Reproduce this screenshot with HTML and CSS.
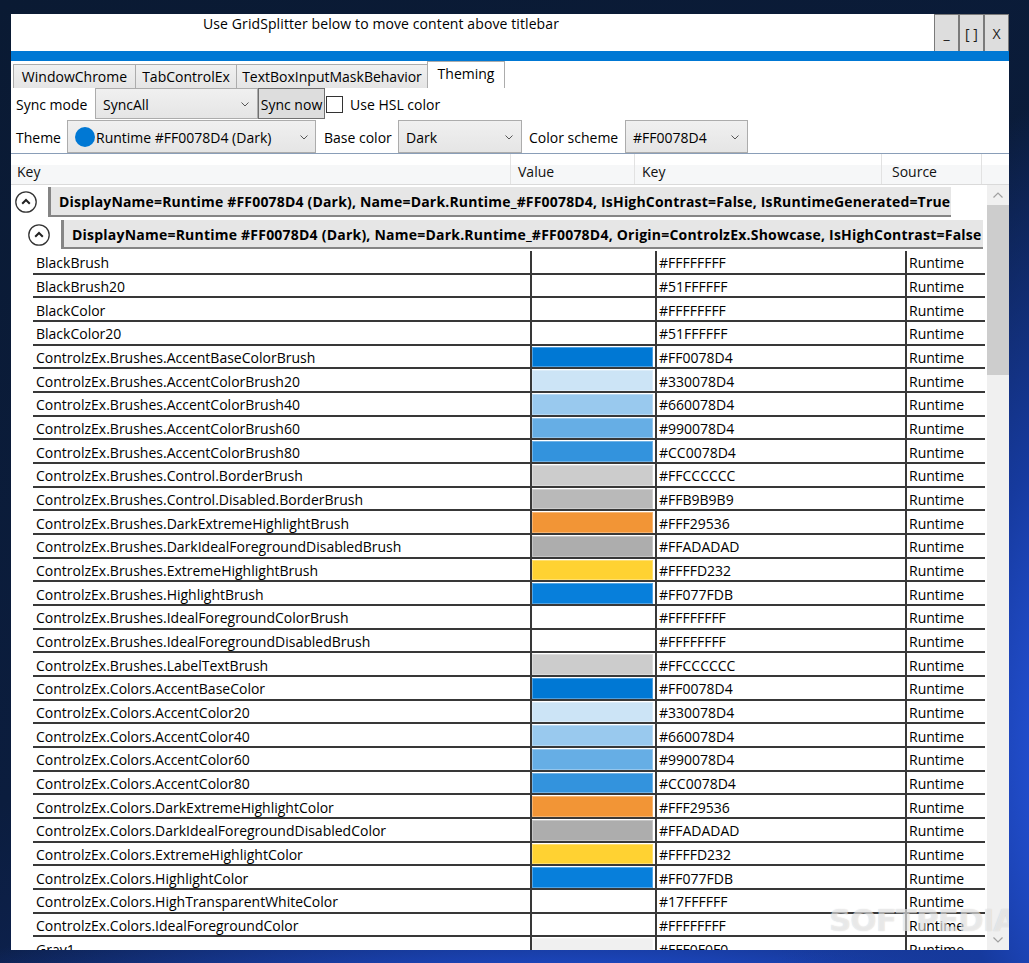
FILE: index.html
```html
<!DOCTYPE html>
<html>
<head>
<meta charset="utf-8">
<link rel="stylesheet" href="styles.css">
</head>
<body>
<div class="win">
  <div class="titlebar">
    <div class="title">Use GridSplitter below to move content above titlebar</div>
    <div class="capbtns">
      <div class="capbtn">_</div>
      <div class="capbtn">[ ]</div>
      <div class="capbtn">X</div>
    </div>
  </div>
  <div class="accent"></div>
  <div class="tabs">
    <div class="tab w1">WindowChrome</div>
    <div class="tab w2">TabControlEx</div>
    <div class="tab w3">TextBoxInputMaskBehavior</div>
    <div class="tab sel w4">Theming</div>
  </div>
  <div class="r1">
    <div class="lbl l-sync">Sync mode</div>
    <div class="combo c-sync"><span>SyncAll</span><svg class="chev" width="8" height="5" viewBox="0 0 8 5"><path d="M0.5 0.5 L4 4 L7.5 0.5" fill="none" stroke="#555" stroke-width="1"/></svg></div>
    <div class="btn">Sync now</div>
    <div class="chk"></div>
    <div class="chklbl">Use HSL color</div>
  </div>
  <div class="r2">
    <div class="lbl l-theme">Theme</div>
    <div class="combo c-theme"><span class="dot"></span><span class="ctext">Runtime #FF0078D4 (Dark)</span><svg class="chev" width="8" height="5" viewBox="0 0 8 5"><path d="M0.5 0.5 L4 4 L7.5 0.5" fill="none" stroke="#555" stroke-width="1"/></svg></div>
    <div class="lbl l-base">Base color</div>
    <div class="combo c-base"><span>Dark</span><svg class="chev" width="8" height="5" viewBox="0 0 8 5"><path d="M0.5 0.5 L4 4 L7.5 0.5" fill="none" stroke="#555" stroke-width="1"/></svg></div>
    <div class="lbl l-scheme">Color scheme</div>
    <div class="combo c-scheme"><span>#FF0078D4</span><svg class="chev" width="8" height="5" viewBox="0 0 8 5"><path d="M0.5 0.5 L4 4 L7.5 0.5" fill="none" stroke="#555" stroke-width="1"/></svg></div>
  </div>
  <div class="grid">
    <div class="ghead">
      <div class="hc h1">Key</div>
      <div class="hc h2">Value</div>
      <div class="hc h3">Key</div>
      <div class="hc h4">Source</div>
    </div>
    <div class="gbody">
      <div class="scroll">
        <div class="grp g1">
          <svg class="exp" width="22" height="22" viewBox="0 0 22 22"><circle cx="11" cy="11" r="10.2" fill="#fff" stroke="#333" stroke-width="1.3"/><path d="M7.2 12.8 L11 9 L14.8 12.8" fill="none" stroke="#222" stroke-width="2"/></svg>
          <div class="ghdr">DisplayName=Runtime #FF0078D4 (Dark), Name=Dark.Runtime_#FF0078D4, IsHighContrast=False, IsRuntimeGenerated=True</div>
        </div>
        <div class="grp g2">
          <svg class="exp" width="22" height="22" viewBox="0 0 22 22"><circle cx="11" cy="11" r="10.2" fill="#fff" stroke="#333" stroke-width="1.3"/><path d="M7.2 12.8 L11 9 L14.8 12.8" fill="none" stroke="#222" stroke-width="2"/></svg>
          <div class="ghdr">DisplayName=Runtime #FF0078D4 (Dark), Name=Dark.Runtime_#FF0078D4, Origin=ControlzEx.Showcase, IsHighContrast=False</div>
        </div>
        <div class="rows">
          <div class="row"><div class="c k">BlackBrush</div><div class="c v"><div class="sw" style="background:#FFFFFF"></div></div><div class="c k2">#FFFFFFFF</div><div class="c s">Runtime</div></div>
          <div class="row"><div class="c k">BlackBrush20</div><div class="c v"><div class="sw" style="background:rgba(255,255,255,0.32)"></div></div><div class="c k2">#51FFFFFF</div><div class="c s">Runtime</div></div>
          <div class="row"><div class="c k">BlackColor</div><div class="c v"><div class="sw" style="background:#FFFFFF"></div></div><div class="c k2">#FFFFFFFF</div><div class="c s">Runtime</div></div>
          <div class="row"><div class="c k">BlackColor20</div><div class="c v"><div class="sw" style="background:rgba(255,255,255,0.32)"></div></div><div class="c k2">#51FFFFFF</div><div class="c s">Runtime</div></div>
          <div class="row"><div class="c k">ControlzEx.Brushes.AccentBaseColorBrush</div><div class="c v"><div class="sw" style="background:#0078D4"></div></div><div class="c k2">#FF0078D4</div><div class="c s">Runtime</div></div>
          <div class="row"><div class="c k">ControlzEx.Brushes.AccentColorBrush20</div><div class="c v"><div class="sw" style="background:rgba(0,120,212,0.2)"></div></div><div class="c k2">#330078D4</div><div class="c s">Runtime</div></div>
          <div class="row"><div class="c k">ControlzEx.Brushes.AccentColorBrush40</div><div class="c v"><div class="sw" style="background:rgba(0,120,212,0.4)"></div></div><div class="c k2">#660078D4</div><div class="c s">Runtime</div></div>
          <div class="row"><div class="c k">ControlzEx.Brushes.AccentColorBrush60</div><div class="c v"><div class="sw" style="background:rgba(0,120,212,0.6)"></div></div><div class="c k2">#990078D4</div><div class="c s">Runtime</div></div>
          <div class="row"><div class="c k">ControlzEx.Brushes.AccentColorBrush80</div><div class="c v"><div class="sw" style="background:rgba(0,120,212,0.8)"></div></div><div class="c k2">#CC0078D4</div><div class="c s">Runtime</div></div>
          <div class="row"><div class="c k">ControlzEx.Brushes.Control.BorderBrush</div><div class="c v"><div class="sw" style="background:#CCCCCC"></div></div><div class="c k2">#FFCCCCCC</div><div class="c s">Runtime</div></div>
          <div class="row"><div class="c k">ControlzEx.Brushes.Control.Disabled.BorderBrush</div><div class="c v"><div class="sw" style="background:#B9B9B9"></div></div><div class="c k2">#FFB9B9B9</div><div class="c s">Runtime</div></div>
          <div class="row"><div class="c k">ControlzEx.Brushes.DarkExtremeHighlightBrush</div><div class="c v"><div class="sw" style="background:#F29536"></div></div><div class="c k2">#FFF29536</div><div class="c s">Runtime</div></div>
          <div class="row"><div class="c k">ControlzEx.Brushes.DarkIdealForegroundDisabledBrush</div><div class="c v"><div class="sw" style="background:#ADADAD"></div></div><div class="c k2">#FFADADAD</div><div class="c s">Runtime</div></div>
          <div class="row"><div class="c k">ControlzEx.Brushes.ExtremeHighlightBrush</div><div class="c v"><div class="sw" style="background:#FFD232"></div></div><div class="c k2">#FFFFD232</div><div class="c s">Runtime</div></div>
          <div class="row"><div class="c k">ControlzEx.Brushes.HighlightBrush</div><div class="c v"><div class="sw" style="background:#077FDB"></div></div><div class="c k2">#FF077FDB</div><div class="c s">Runtime</div></div>
          <div class="row"><div class="c k">ControlzEx.Brushes.IdealForegroundColorBrush</div><div class="c v"><div class="sw" style="background:#FFFFFF"></div></div><div class="c k2">#FFFFFFFF</div><div class="c s">Runtime</div></div>
          <div class="row"><div class="c k">ControlzEx.Brushes.IdealForegroundDisabledBrush</div><div class="c v"><div class="sw" style="background:#FFFFFF"></div></div><div class="c k2">#FFFFFFFF</div><div class="c s">Runtime</div></div>
          <div class="row"><div class="c k">ControlzEx.Brushes.LabelTextBrush</div><div class="c v"><div class="sw" style="background:#CCCCCC"></div></div><div class="c k2">#FFCCCCCC</div><div class="c s">Runtime</div></div>
          <div class="row"><div class="c k">ControlzEx.Colors.AccentBaseColor</div><div class="c v"><div class="sw" style="background:#0078D4"></div></div><div class="c k2">#FF0078D4</div><div class="c s">Runtime</div></div>
          <div class="row"><div class="c k">ControlzEx.Colors.AccentColor20</div><div class="c v"><div class="sw" style="background:rgba(0,120,212,0.2)"></div></div><div class="c k2">#330078D4</div><div class="c s">Runtime</div></div>
          <div class="row"><div class="c k">ControlzEx.Colors.AccentColor40</div><div class="c v"><div class="sw" style="background:rgba(0,120,212,0.4)"></div></div><div class="c k2">#660078D4</div><div class="c s">Runtime</div></div>
          <div class="row"><div class="c k">ControlzEx.Colors.AccentColor60</div><div class="c v"><div class="sw" style="background:rgba(0,120,212,0.6)"></div></div><div class="c k2">#990078D4</div><div class="c s">Runtime</div></div>
          <div class="row"><div class="c k">ControlzEx.Colors.AccentColor80</div><div class="c v"><div class="sw" style="background:rgba(0,120,212,0.8)"></div></div><div class="c k2">#CC0078D4</div><div class="c s">Runtime</div></div>
          <div class="row"><div class="c k">ControlzEx.Colors.DarkExtremeHighlightColor</div><div class="c v"><div class="sw" style="background:#F29536"></div></div><div class="c k2">#FFF29536</div><div class="c s">Runtime</div></div>
          <div class="row"><div class="c k">ControlzEx.Colors.DarkIdealForegroundDisabledColor</div><div class="c v"><div class="sw" style="background:#ADADAD"></div></div><div class="c k2">#FFADADAD</div><div class="c s">Runtime</div></div>
          <div class="row"><div class="c k">ControlzEx.Colors.ExtremeHighlightColor</div><div class="c v"><div class="sw" style="background:#FFD232"></div></div><div class="c k2">#FFFFD232</div><div class="c s">Runtime</div></div>
          <div class="row"><div class="c k">ControlzEx.Colors.HighlightColor</div><div class="c v"><div class="sw" style="background:#077FDB"></div></div><div class="c k2">#FF077FDB</div><div class="c s">Runtime</div></div>
          <div class="row"><div class="c k">ControlzEx.Colors.HighTransparentWhiteColor</div><div class="c v"><div class="sw" style="background:rgba(255,255,255,0.09)"></div></div><div class="c k2">#17FFFFFF</div><div class="c s">Runtime</div></div>
          <div class="row"><div class="c k">ControlzEx.Colors.IdealForegroundColor</div><div class="c v"><div class="sw" style="background:#FFFFFF"></div></div><div class="c k2">#FFFFFFFF</div><div class="c s">Runtime</div></div>
          <div class="row"><div class="c k">Gray1</div><div class="c v"><div class="sw" style="background:#F0F0F0"></div></div><div class="c k2">#FFF0F0F0</div><div class="c s">Runtime</div></div>
        </div>
      </div>
      <div class="vsb">
        <div class="sbbtn"><svg width="10" height="6" viewBox="0 0 10 6"><path d="M0.5 5.5 L5 1 L9.5 5.5" fill="none" stroke="#a0a0a0" stroke-width="1.2"/></svg></div>
        <div class="thumb"></div>
        <div class="sbfill"></div>
        <div class="sbbtn"><svg width="10" height="6" viewBox="0 0 10 6"><path d="M0.5 0.5 L5 5 L9.5 0.5" fill="none" stroke="#a0a0a0" stroke-width="1.2"/></svg></div>
      </div>
    </div>
  </div>
  <div class="wm">SOFTPEDIA<sup>®</sup></div>
</div>
</body>
</html>
```
FILE: styles.css
```css
html, body {
  margin: 0;
  padding: 0;
}
body {
  width: 1029px;
  height: 963px;
  overflow: hidden;
  font-family: "Open Sans", "Noto Sans", sans-serif;
  font-size: 14px;
  color: #000;
  background:
    radial-gradient(ellipse 420px 700px at 1180px 760px, #3b78f2 0%, #2452d8 30%, #163a9e 55%, rgba(12,30,80,0) 100%),
    radial-gradient(ellipse 700px 120px at 600px 1010px, #2c62e6 0%, #1b44b8 40%, rgba(12,30,80,0) 100%),
    linear-gradient(160deg, #0a1a33 0%, #0b1d3e 60%, #10286a 100%);
}
.win {
  position: relative;
  margin: 14px 0 0 11px;
  width: 998px;
  height: 936px;
  background: #fff;
  display: flex;
  flex-direction: column;
  overflow: hidden;
}
.titlebar {
  height: 37px;
  display: flex;
  flex-shrink: 0;
}
.title {
  flex: 1;
  padding-left: 192px;
  line-height: 20px;
  padding-top: 0;
  white-space: nowrap;
  letter-spacing: 0.1px;
}
.capbtns {
  display: flex;
}
.capbtn {
  width: 25px;
  height: 37px;
  box-sizing: border-box;
  border: 1px solid #7a7a7a;
  border-bottom: none;
  background: #dddddd;
  display: flex;
  align-items: center;
  justify-content: center;
  color: #1a1a1a;
}
.accent {
  height: 10px;
  background: #0078d4;
  flex-shrink: 0;
}
.tabs {
  height: 27px;
  display: flex;
  align-items: flex-end;
  padding-left: 2px;
  flex-shrink: 0;
}
.tab {
  height: 24px;
  box-sizing: border-box;
  border: 1px solid #acacac;
  border-bottom: none;
  background: linear-gradient(#f0f0f0, #e5e5e5);
  margin-right: -1px;
  display: flex;
  align-items: center;
  justify-content: center;
  white-space: nowrap;
}
.tab.sel {
  height: 27px;
  background: #fff;
  padding-bottom: 3px;
}
.w1 { width: 123px; }
.w2 { width: 102px; }
.w3 { width: 192px; }
.w4 { width: 78px; }
.r1 {
  height: 32px;
  display: flex;
  align-items: flex-start;
  flex-shrink: 0;
}
.r2 {
  height: 33px;
  display: flex;
  align-items: flex-start;
  flex-shrink: 0;
}
.lbl {
  height: 31px;
  display: flex;
  align-items: center;
  box-sizing: border-box;
  white-space: nowrap;
  padding-top: 1px;
}
.r2 .lbl { height: 33px; }
.l-sync { width: 84px; padding-left: 5px; }
.l-theme { width: 56px; padding-left: 5px; }
.l-base { width: 82px; padding-left: 8px; }
.l-scheme { width: 103px; padding-left: 7px; }
.combo {
  height: 31px;
  box-sizing: border-box;
  border: 1px solid #acacac;
  background: linear-gradient(#f0f0f0, #e5e5e5);
  display: flex;
  align-items: center;
  padding: 1px 8px 0 7px;
  white-space: nowrap;
}
.r2 .combo { height: 33px; }
.combo .chev { margin-left: auto; }
.c-sync { width: 163px; }
.c-theme { width: 249px; padding-right: 7px; }
.c-base { width: 124px; }
.c-scheme { width: 123px; }
.dot {
  width: 20px;
  height: 20px;
  border-radius: 50%;
  background: #0078d4;
  margin-right: 1px;
  flex-shrink: 0;
}
.btn {
  width: 67px;
  height: 31px;
  box-sizing: border-box;
  border: 1px solid #707070;
  background: #dddddd;
  display: flex;
  align-items: center;
  justify-content: center;
  white-space: nowrap;
  padding-top: 1px;
}
.chk {
  width: 17px;
  height: 17px;
  box-sizing: border-box;
  border: 1px solid #333;
  background: #fff;
  margin: 8px 0 0 1px;
}
.chklbl {
  height: 31px;
  display: flex;
  align-items: center;
  margin-left: 7px;
  padding-top: 1px;
  box-sizing: border-box;
}
.grid {
  flex: 1;
  min-height: 0;
  border-top: 1px solid #8a9eb8;
  display: flex;
  flex-direction: column;
}
.ghead {
  height: 31px;
  box-sizing: border-box;
  border-bottom: 1px solid #dadada;
  display: flex;
  flex-shrink: 0;
  background: linear-gradient(#ffffff 0%, #ffffff 36%, #f6f7f8 37%, #f6f7f8 100%);
}
.hc {
  box-sizing: border-box;
  border-right: 1px solid #e2e2e2;
  padding: 0 0 3px 6px;
  display: flex;
  align-items: flex-end;
  color: #111;
}
.h1 { width: 500px; }
.h2 { width: 124px; padding-left: 7px; }
.h3 { width: 247px; padding-left: 7px; }
.h4 { width: 100px; padding-left: 10px; }
.gbody {
  flex: 1;
  min-height: 0;
  display: flex;
}
.scroll {
  flex: 1;
  overflow: hidden;
  min-width: 0;
}
.grp {
  height: 33px;
  display: flex;
  align-items: center;
}
.exp { flex-shrink: 0; }
.g1 .exp { margin-left: 4px; }
.g2 .exp { margin-left: 17px; }
.ghdr {
  align-self: flex-start;
  margin-top: 2px;
  margin-left: 11px;
  height: 30px;
  box-sizing: border-box;
  border-left: 3px solid #858585;
  border-bottom: 2px solid #858585;
  background: #e6e6e6;
  padding: 1px 1px 0 8px;
  font-weight: bold;
  letter-spacing: 0.18px;
  display: flex;
  align-items: center;
  white-space: nowrap;
}
.g2 .ghdr { height: 29px; letter-spacing: 0.22px; }
.rows {
  margin-left: 22px;
  width: 952px;
}
.row {
  height: 23.68px;
  box-sizing: border-box;
  border-bottom: 2px solid #383838;
  display: flex;
}
.c {
  box-sizing: border-box;
  display: flex;
  align-items: center;
  white-space: nowrap;
  overflow: hidden;
  padding-top: 2px;
}
.k { width: 499px; border-right: 2px solid #383838; padding-left: 3px; }
.v { width: 125px; border-right: 2px solid #383838; align-items: stretch; padding-top: 0; }
.k2 { width: 250px; border-right: 2px solid #383838; padding-left: 2px; }
.s { width: 78px; padding-left: 2px; }
.sw {
  flex: 1;
  margin: 1px 2px 0 0;
  box-shadow: inset 0 0 0 1px rgba(255,255,255,0.3);
}
.vsb {
  width: 22px;
  background: #f0f0f0;
  display: flex;
  flex-direction: column;
  flex-shrink: 0;
}
.sbbtn {
  height: 20px;
  display: flex;
  align-items: center;
  justify-content: center;
  flex-shrink: 0;
}
.thumb {
  height: 170px;
  background: #cdcdcd;
  flex-shrink: 0;
}
.sbfill { flex: 1; }
.wm {
  position: absolute;
  left: 818px;
  top: 888px;
  font-family: "DejaVu Sans", sans-serif;
  font-weight: bold;
  font-size: 31px;
  letter-spacing: -1px;
  color: rgba(255,255,255,0.55);
  text-shadow: 0 0 1px rgba(120,120,120,0.35);
  pointer-events: none;
}
.wm sup {
  font-size: 12px;
  vertical-align: top;
}
```
